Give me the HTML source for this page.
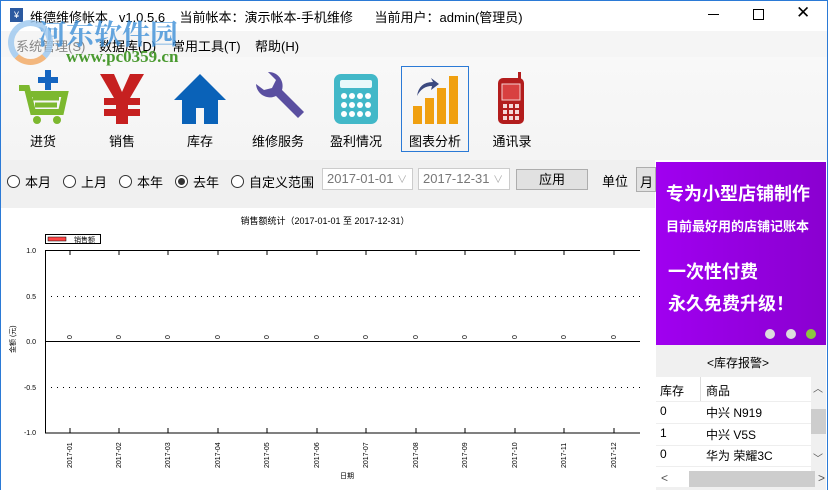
<!DOCTYPE html>
<html><head><meta charset="utf-8"><style>
*{margin:0;padding:0;box-sizing:border-box}
body{width:828px;height:490px;overflow:hidden;font-family:"Liberation Sans","Microsoft YaHei","Noto Sans CJK SC",sans-serif;font-size:12px;color:#000;background:#fff;position:relative}
.abs{position:absolute}
.win{position:absolute;left:0;top:0;width:828px;height:490px;border:1px solid #2b7ad6;border-bottom:none}
.title{top:0;left:0;width:828px;height:31px;background:#fff}
.menu{top:31px;left:0;width:828px;height:26px;background:#f5f5f5;font-size:13px}
.tool{top:57px;left:0;width:828px;height:103px;background:linear-gradient(#f8f8f8,#f4f4f4)}
.ctrl{top:160px;left:0;width:655px;height:48px;background:#f0f0f0}
.tb{position:absolute;top:13px;width:60px;text-align:center;font-size:13px}
.tb .ic{display:block;width:56px;height:56px;margin:0 auto 5px}
.radio{position:absolute;top:172px;font-size:13px;display:flex;align-items:center}
.radio i{display:inline-block;width:13px;height:13px;border:1px solid #333;border-radius:50%;margin-right:5px;position:relative;background:#fff}
.radio i.on:after{content:"";position:absolute;left:2px;top:2px;width:7px;height:7px;border-radius:50%;background:#333}
.date{position:absolute;top:168px;height:22px;border:1px solid #ccc;background:#fff;color:#777;font-size:13px;padding:2px 4px}
.ad{left:656px;top:162px;width:170px;height:183px;background:linear-gradient(90deg,#a000f0,#8a00d0);color:#fff;font-weight:bold}
</style></head><body>
<div class="abs title">
 <div class="abs" style="left:10px;top:8px;width:13px;height:14px;background:#2c5aa0;color:#fff;font-size:9px;text-align:center;line-height:14px">¥</div>
 <div class="abs" style="left:30px;top:7px;font-size:13px;white-space:pre">维德维修帐本   v1.0.5.6    当前帐本：演示帐本-手机维修      当前用户：admin(管理员)</div>
 <div class="abs" style="left:708px;top:14px;width:11px;height:1px;background:#000"></div>
 <div class="abs" style="left:753px;top:9px;width:11px;height:11px;border:1px solid #000"></div>
 <div class="abs" style="left:796px;top:3px;font-size:17px">✕</div>
</div>
<div class="abs menu"><span class="abs" style="left:16px;top:5px;color:#888">系统管理(S)</span><span class="abs" style="left:99px;top:5px">数据库(D)</span><span class="abs" style="left:172px;top:5px">常用工具(T)</span><span class="abs" style="left:255px;top:5px">帮助(H)</span></div>
<div class="abs tool">
<div class="tb" style="left:13px"><svg class="ic" viewBox="0 0 56 56"><rect x="30" y="0" width="6" height="20" fill="#1565c0"/><rect x="23" y="7" width="20" height="6" fill="#1565c0"/><path d="M4 18h8l6 24h28l4-18H16" fill="none" stroke="#7cb82f" stroke-width="6"/><path d="M18 28h26M20 35h22" stroke="#7cb82f" stroke-width="5"/><circle cx="22" cy="50" r="4" fill="#7cb82f"/><circle cx="42" cy="50" r="4" fill="#7cb82f"/></svg>进货</div>
<div class="tb" style="left:92px"><svg class="ic" viewBox="0 0 56 56"><path d="M6 4h14l8 18 8-18h14L36 28h10v7H34v4h12v7H34v8H22v-8H10v-7h12v-4H10v-7h10z" fill="#c62020"/></svg>销售</div>
<div class="tb" style="left:170px"><svg class="ic" viewBox="0 0 56 56"><path d="M28 4L2 30h8v24h14V38h8v16h14V30h8z" fill="#0a62b8"/></svg>库存</div>
<div class="tb" style="left:248px"><svg class="ic" viewBox="0 0 56 56"><path d="M6 14a14 14 0 0 0 20 12l22 22 6-6-22-22A14 14 0 0 0 18 2l8 8-4 8-8 2z" fill="#5a4fa0"/></svg>维修服务</div>
<div class="tb" style="left:326px"><svg class="ic" viewBox="0 0 56 56"><rect x="6" y="4" width="44" height="50" rx="7" fill="#42b8c8"/><rect x="12" y="10" width="32" height="8" rx="2" fill="#e8f8fa"/><g fill="#fff"><circle cx="16" cy="26" r="3"/><circle cx="24" cy="26" r="3"/><circle cx="32" cy="26" r="3"/><circle cx="40" cy="26" r="3"/><circle cx="16" cy="35" r="3"/><circle cx="24" cy="35" r="3"/><circle cx="32" cy="35" r="3"/><circle cx="40" cy="35" r="3"/><circle cx="16" cy="44" r="3"/><circle cx="24" cy="44" r="3"/><circle cx="32" cy="44" r="3"/><circle cx="40" cy="44" r="3"/></g></svg>盈利情况</div>
<div class="abs" style="left:401px;top:9px;width:68px;height:86px;border:1px solid #2b7ad6"></div>
<div class="tb" style="left:405px"><svg class="ic" viewBox="0 0 56 56"><g fill="#f0a010"><rect x="6" y="36" width="9" height="18"/><rect x="18" y="28" width="9" height="26"/><rect x="30" y="18" width="9" height="36"/><rect x="42" y="6" width="9" height="48"/></g><path d="M10 26q2-14 16-14l-2-4 8 6-8 6 1-4q-10 0-15 10z" fill="#3c4a80"/></svg>图表分析</div>
<div class="tb" style="left:482px"><svg class="ic" viewBox="0 0 56 56"><rect x="34" y="2" width="3" height="8" fill="#b31d1d"/><rect x="14" y="8" width="26" height="46" rx="5" fill="#b31d1d"/><rect x="18" y="14" width="18" height="16" fill="#d84040" stroke="#f4d0d0"/><g fill="#f4d8d8"><rect x="19" y="34" width="4" height="4"/><rect x="25" y="34" width="4" height="4"/><rect x="31" y="34" width="4" height="4"/><rect x="19" y="40" width="4" height="4"/><rect x="25" y="40" width="4" height="4"/><rect x="31" y="40" width="4" height="4"/><rect x="19" y="46" width="4" height="4"/><rect x="25" y="46" width="4" height="4"/><rect x="31" y="46" width="4" height="4"/></g></svg>通讯录</div>
</div>
<div class="abs" style="left:38px;top:13px;font-size:28px;font-weight:bold;color:#3d8fd8;opacity:.8;font-family:'Noto Serif CJK SC',serif">河东软件园</div>
<div class="abs" style="left:66px;top:47px;font-size:17px;font-weight:bold;color:#4a9a30;font-family:'Liberation Serif',serif">www.pc0359.cn</div>
<div class="abs" style="left:8px;top:20px;width:45px;height:45px;border-radius:50%;border:6px solid #9cc8ef;border-bottom-color:#f2a860;opacity:.8"></div>
<div class="abs ctrl"></div>
<div class="radio" style="left:7px"><i></i>本月</div>
<div class="radio" style="left:63px"><i></i>上月</div>
<div class="radio" style="left:119px"><i></i>本年</div>
<div class="radio" style="left:175px"><i class="on"></i>去年</div>
<div class="radio" style="left:231px"><i></i>自定义范围</div>
<div class="date" style="left:322px;width:91px">2017-01-01 <span style="color:#aaa;font-size:10px">∨</span></div>
<div class="date" style="left:418px;width:92px">2017-12-31 <span style="color:#aaa;font-size:10px">∨</span></div>
<div class="abs" style="left:516px;top:169px;width:72px;height:21px;border:1px solid #adadad;background:#e1e1e1;text-align:center;font-size:13px;line-height:19px">应用</div>
<div class="abs" style="left:602px;top:171px;font-size:13px">单位</div>
<div class="abs" style="left:636px;top:167px;width:20px;height:25px;border:1px solid #adadad;background:#e1e1e1;font-size:13px;padding:4px 3px">月</div>
<div class="abs ad">
 <div class="abs" style="left:10px;top:18px;font-size:18px">专为小型店铺制作</div>
 <div class="abs" style="left:10px;top:54px;font-size:13px">目前最好用的店铺记账本</div>
 <div class="abs" style="left:12px;top:96px;font-size:18px">一次性付费</div>
 <div class="abs" style="left:12px;top:128px;font-size:18px">永久免费升级！</div>
 <div class="abs" style="left:109px;top:167px;width:10px;height:10px;border-radius:50%;background:#ddd"></div>
 <div class="abs" style="left:130px;top:167px;width:10px;height:10px;border-radius:50%;background:#ddd"></div>
 <div class="abs" style="left:150px;top:167px;width:10px;height:10px;border-radius:50%;background:#8cc63f"></div>
</div>
<div class="abs" style="left:656px;top:345px;width:170px;height:145px;background:#f0f0f0">
 <div class="abs" style="left:51px;top:9px;font-size:12px">&lt;库存报警&gt;</div>
 <div class="abs" style="left:0;top:32px;width:155px;height:110px;background:#fff;font-size:12px">
  <div class="abs" style="left:4px;top:5px">库存</div><div class="abs" style="left:50px;top:5px">商品</div>
  <div class="abs" style="left:44px;top:0;width:1px;height:24px;background:#ddd"></div>
  <div class="abs" style="left:0;top:24px;width:155px;height:1px;background:#eee"></div>
  <div class="abs" style="left:4px;top:27px">0</div><div class="abs" style="left:50px;top:27px">中兴 N919</div>
  <div class="abs" style="left:0;top:46px;width:155px;height:1px;background:#eee"></div>
  <div class="abs" style="left:4px;top:49px">1</div><div class="abs" style="left:50px;top:49px">中兴 V5S</div>
  <div class="abs" style="left:0;top:68px;width:155px;height:1px;background:#eee"></div>
  <div class="abs" style="left:4px;top:70px">0</div><div class="abs" style="left:50px;top:70px">华为 荣耀3C</div>
  <div class="abs" style="left:0;top:89px;width:155px;height:1px;background:#eee"></div>
 </div>
 <div class="abs" style="left:155px;top:64px;width:15px;height:25px;background:#cdcdcd"></div>
 <div class="abs" style="left:33px;top:126px;width:126px;height:16px;background:#cdcdcd"></div>
 <div class="abs" style="left:157px;top:35px;font-size:10px;color:#555">︿</div>
 <div class="abs" style="left:157px;top:105px;font-size:10px;color:#555">﹀</div>
 <div class="abs" style="left:5px;top:126px;font-size:12px;color:#555">&lt;</div>
 <div class="abs" style="left:162px;top:126px;font-size:12px;color:#555">&gt;</div>
</div>
<svg class="abs" style="left:0;top:208px" width="655" height="282" font-family="Liberation Sans,Noto Sans CJK SC,sans-serif">
 <text x="325" y="16" font-size="9" text-anchor="middle">销售额统计（2017-01-01 至 2017-12-31）</text>
 <rect x="45.5" y="26.5" width="55" height="9" fill="#fff" stroke="#000"/><rect x="48" y="29" width="18" height="4" fill="#f44" stroke="#000" stroke-width=".5"/><text x="74" y="34" font-size="7">销售额</text>
 <path d="M45.5 42.5H640M45.5 42V225H640" stroke="#000" fill="none"/>
 <path d="M45 133.5H640" stroke="#000"/>
 <path d="M45 88.5H640M45 179.5H640" stroke="#000" stroke-dasharray="1 5"/>
 <g font-size="7" text-anchor="end"><text x="36" y="45">1.0</text><text x="36" y="91">0.5</text><text x="36" y="136">0.0</text><text x="36" y="182">-0.5</text><text x="36" y="227">-1.0</text></g>
 <text transform="translate(15 145) rotate(-90)" font-size="7">金额 (元)</text>
 <text x="340" y="270" font-size="7">日期</text>
 <g stroke="#000">
 <path d="M70 42v5M119 42v5M168 42v5M218 42v5M267 42v5M317 42v5M366 42v5M416 42v5M465 42v5M515 42v5M564 42v5M614 42v5M70 225v-5M119 225v-5M168 225v-5M218 225v-5M267 225v-5M317 225v-5M366 225v-5M416 225v-5M465 225v-5M515 225v-5M564 225v-5M614 225v-5"/>
 </g>
 <g font-size="7">
 <text transform="translate(72 260) rotate(-90)">2017-01</text><text transform="translate(121 260) rotate(-90)">2017-02</text><text transform="translate(170 260) rotate(-90)">2017-03</text><text transform="translate(220 260) rotate(-90)">2017-04</text><text transform="translate(269 260) rotate(-90)">2017-05</text><text transform="translate(319 260) rotate(-90)">2017-06</text><text transform="translate(368 260) rotate(-90)">2017-07</text><text transform="translate(418 260) rotate(-90)">2017-08</text><text transform="translate(467 260) rotate(-90)">2017-09</text><text transform="translate(517 260) rotate(-90)">2017-10</text><text transform="translate(566 260) rotate(-90)">2017-11</text><text transform="translate(616 260) rotate(-90)">2017-12</text>
 <text transform="translate(72 131) rotate(-90)">0</text><text transform="translate(121 131) rotate(-90)">0</text><text transform="translate(170 131) rotate(-90)">0</text><text transform="translate(220 131) rotate(-90)">0</text><text transform="translate(269 131) rotate(-90)">0</text><text transform="translate(319 131) rotate(-90)">0</text><text transform="translate(368 131) rotate(-90)">0</text><text transform="translate(418 131) rotate(-90)">0</text><text transform="translate(467 131) rotate(-90)">0</text><text transform="translate(517 131) rotate(-90)">0</text><text transform="translate(566 131) rotate(-90)">0</text><text transform="translate(616 131) rotate(-90)">0</text>
 </g>
</svg>
<div class="win"></div>
</body></html>
